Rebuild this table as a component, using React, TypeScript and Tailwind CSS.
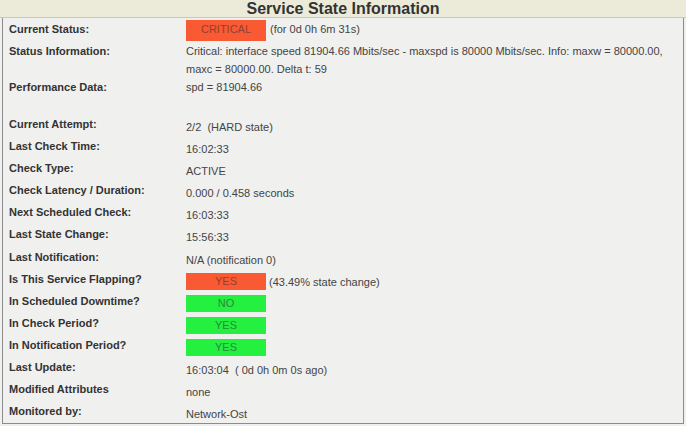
import React from "react";

type Row = {
  label: string;
  value?: React.ReactNode;
  badge?: { text: string; tone: "red" | "green" };
  extra?: string;
};

const rows: Row[] = [
  { label: "Current Attempt:", value: "2/2  (HARD state)" },
  { label: "Last Check Time:", value: "16:02:33" },
  { label: "Check Type:", value: "ACTIVE" },
  { label: "Check Latency / Duration:", value: "0.000 / 0.458 seconds" },
  { label: "Next Scheduled Check:", value: "16:03:33" },
  { label: "Last State Change:", value: "15:56:33" },
  { label: "Last Notification:", value: "N/A (notification 0)" },
  { label: "Is This Service Flapping?", badge: { text: "YES", tone: "red" }, extra: "(43.49% state change)" },
  { label: "In Scheduled Downtime?", badge: { text: "NO", tone: "green" } },
  { label: "In Check Period?", badge: { text: "YES", tone: "green" } },
  { label: "In Notification Period?", badge: { text: "YES", tone: "green" } },
  { label: "Last Update:", value: "16:03:04  ( 0d 0h 0m 0s ago)" },
  { label: "Modified Attributes", value: "none" },
  { label: "Monitored by:", value: "Network-Ost" },
];

function Badge({ text, tone }: { text: string; tone: "red" | "green" }) {
  return (
    <div
      className={`w-[80px] h-[17px] leading-[17px] text-center ${
        tone === "red" ? "bg-[#f95a33] text-[#93402f]" : "bg-[#23f03f] text-[#2b8a3b]"
      }`}
    >
      {text}
    </div>
  );
}

export default function App() {
  return (
    <div className="w-[686px] h-[426px] bg-[#f0f0ef] font-['Liberation_Sans',Arial,sans-serif] text-[11px] text-[#444] overflow-hidden">
      {/* Header */}
      <div className="h-[18px] bg-[#ecebd9] border-b border-[#c9c8b4] text-center text-[16px] font-bold leading-[17px] text-[#333]">
        Service State Information
      </div>

      <div className="mx-[2px] h-[406px] border-x border-b border-[#8c8c8c]">
        {/* Current status */}
        <div className="flex h-[22px] items-center">
          <div className="w-[183px] pl-[6px] font-bold text-[#333]">Current Status:</div>
          <div className="w-[80px] h-[21px] mt-[2px] bg-[#f95a33] text-[#93402f] text-center leading-[19px]">
            CRITICAL
          </div>
          <span className="ml-[4px]">(for 0d 0h 6m 31s)</span>
        </div>

        {/* Status information */}
        <div className="flex h-[38px] pt-[2px] leading-[18px]">
          <div className="w-[183px] shrink-0 pl-[6px] font-bold text-[#333]">Status Information:</div>
          <div className="pr-[8px]">
            Critical: interface speed 81904.66 Mbits/sec - maxspd is 80000 Mbits/sec. Info: maxw = 80000.00,
            <br />
            maxc = 80000.00. Delta t: 59
          </div>
        </div>

        {/* Performance data */}
        <div className="flex h-[18px] leading-[18px]">
          <div className="w-[183px] pl-[6px] font-bold text-[#333]">Performance Data:</div>
          <div>spd = 81904.66</div>
        </div>

        <div className="h-[18px]" />

        {rows.map((row) => (
          <div key={row.label} className="flex h-[22.1px] leading-[18px]">
            <div className="w-[183px] pl-[6px] pt-[1px] font-bold text-[#333]">{row.label}</div>
            {row.badge ? (
              <div className="flex items-start pt-[4px]">
                <Badge text={row.badge.text} tone={row.badge.tone} />
                {row.extra && <span className="ml-[3px] leading-[17px] pt-[1px]">{row.extra}</span>}
              </div>
            ) : (
              <div className="pt-[4px] whitespace-pre">{row.value}</div>
            )}
          </div>
        ))}
      </div>
    </div>
  );
}
